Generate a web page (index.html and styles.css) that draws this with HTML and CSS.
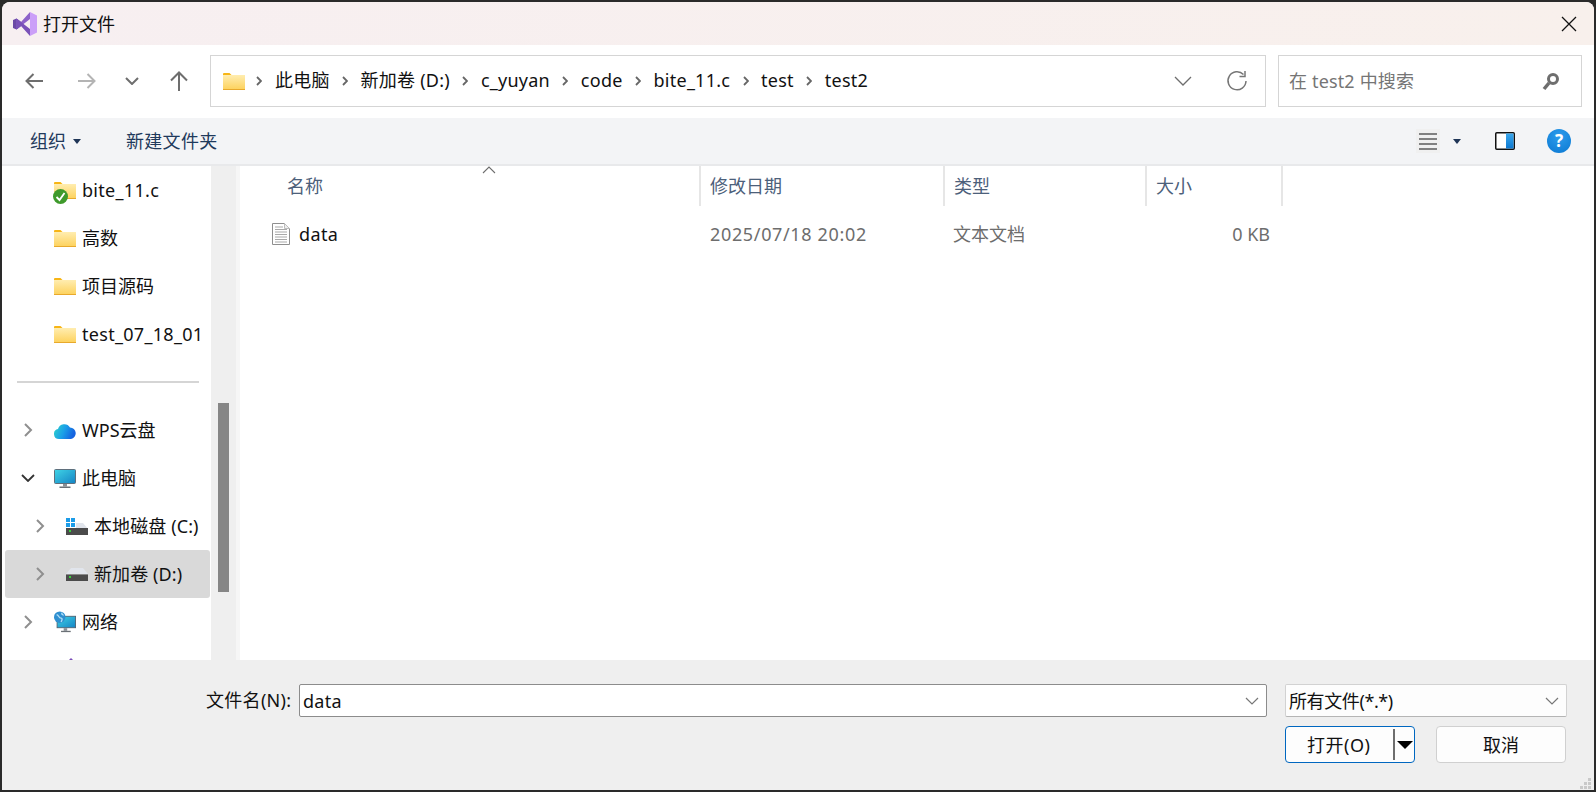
FILE: index.html
```html
<!DOCTYPE html>
<html lang="zh-CN">
<head>
<meta charset="utf-8">
<title>打开文件</title>
<link rel="stylesheet" href="styles.css">
</head>
<body>
<svg class="defs" width="0" height="0" aria-hidden="true">
  <defs>
    <linearGradient id="fg" x1="0" y1="0" x2="0" y2="1"><stop offset="0" stop-color="#ffedb0"/><stop offset="1" stop-color="#fdd15a"/></linearGradient>
    <linearGradient id="cg" x1="0" y1="0" x2="1" y2="0.3"><stop offset="0" stop-color="#2fd6c8"/><stop offset="0.55" stop-color="#1a9fe8"/><stop offset="1" stop-color="#1563e0"/></linearGradient>
    <linearGradient id="mg" x1="0" y1="0" x2="1" y2="1"><stop offset="0" stop-color="#3fd4e6"/><stop offset="1" stop-color="#1583c4"/></linearGradient>
    <linearGradient id="pg" x1="0" y1="0" x2="0" y2="1"><stop offset="0" stop-color="#3aa8ee"/><stop offset="1" stop-color="#0d78d0"/></linearGradient>
    <symbol id="folder" viewBox="0 0 22 17">
      <path d="M0 1a1 1 0 0 1 1-1h5.500l2 2H0z" fill="#f7b516"/>
      <rect x="0" y="2" width="22" height="15" fill="url(#fg)"/>
      <rect x="0" y="16" width="22" height="1" fill="#e8a92c"/>
    </symbol>
    <symbol id="chev-r" viewBox="0 0 10 16"><path d="M2 2l6 6-6 6" fill="none" stroke="#8f8f8f" stroke-width="2"/></symbol>
    <symbol id="chev-s" viewBox="0 0 6 10"><path d="M1 1l4 4-4 4" fill="none" stroke="#666" stroke-width="1.800"/></symbol>
    <symbol id="drive" viewBox="0 0 22 13">
      <path d="M5 0h12l5 6H0z" fill="#e1e5ec"/>
      <rect x="0" y="6" width="22" height="7" fill="#4b4b4b"/>
      <rect x="0" y="6" width="22" height="1" fill="#8a8a8a"/>
      <rect x="3" y="8" width="2" height="2" fill="#37d03c"/>
    </symbol>
  </defs>
</svg>
<main class="dialog">
  <header class="titlebar">
    <svg class="vs-logo" width="24" height="24" viewBox="0 0 24 24" aria-hidden="true">
      <path d="M0 8l3.500-1.500L8 10v4l-4.500 3.500L0 16z" fill="#6b4aa6"/>
      <path d="M3.500 6.500L8 10l9-10v7L3.500 17.500z" fill="#8d62c9"/>
      <path d="M3.500 17.500L8 14l9 10v-7L3.500 6.500z" fill="#7a52b8"/>
      <path d="M17 0l7 3.500v17L17 24z" fill="#cb9ff8"/>
    </svg>
    <span class="title">打开文件</span>
    <svg class="close" width="16" height="16" viewBox="0 0 16 16" aria-hidden="true"><path d="M1 1l14 14M15 1L1 15" stroke="#111" stroke-width="1.300" fill="none"/></svg>
  </header>

  <nav class="navbar">
    <span class="nav-btn w-back"><svg width="18" height="16" viewBox="0 0 18 16"><path d="M18 8H1.500M8.500 1L1.500 8l7 7" fill="none" stroke="#6e6e6e" stroke-width="2"/></svg></span>
    <span class="nav-btn w-fwd"><svg width="18" height="16" viewBox="0 0 18 16"><path d="M0 8h16.500M9.500 1l7 7-7 7" fill="none" stroke="#b4b4b4" stroke-width="2"/></svg></span>
    <span class="nav-btn w-hist"><svg width="14" height="8" viewBox="0 0 14 8"><path d="M1 1l6 6 6-6" fill="none" stroke="#6e6e6e" stroke-width="2"/></svg></span>
    <span class="nav-btn w-up"><svg width="18" height="20" viewBox="0 0 18 20"><path d="M9 20V2M1 9.500L9 1.500l8 8" fill="none" stroke="#6e6e6e" stroke-width="2"/></svg></span>
    <div class="address">
      <svg class="addr-folder" width="22" height="17"><use href="#folder"/></svg>
      <span class="sep"><svg width="6" height="10"><use href="#chev-s"/></svg></span><span class="crumb">此电脑</span>
      <span class="sep"><svg width="6" height="10"><use href="#chev-s"/></svg></span><span class="crumb">新加卷 (D:)</span>
      <span class="sep"><svg width="6" height="10"><use href="#chev-s"/></svg></span><span class="crumb">c_yuyan</span>
      <span class="sep"><svg width="6" height="10"><use href="#chev-s"/></svg></span><span class="crumb">code</span>
      <span class="sep"><svg width="6" height="10"><use href="#chev-s"/></svg></span><span class="crumb">bite_11.c</span>
      <span class="sep"><svg width="6" height="10"><use href="#chev-s"/></svg></span><span class="crumb">test</span>
      <span class="sep"><svg width="6" height="10"><use href="#chev-s"/></svg></span><span class="crumb">test2</span>
      <svg class="addr-drop" width="18" height="10" viewBox="0 0 18 10"><path d="M1 1l8 8 8-8" fill="none" stroke="#6e6e6e" stroke-width="1.300"/></svg>
      <svg class="addr-refresh" width="22" height="22" viewBox="0 0 22 22"><path d="M17.500 4.500A9 9 0 1 0 20 11" fill="none" stroke="#767676" stroke-width="1.500"/><path d="M19 1v5.500h-5.500" fill="none" stroke="#767676" stroke-width="1.500"/></svg>
    </div>
    <div class="search">
      <span class="search-text">在 test2 中搜索</span>
      <svg width="18" height="19" viewBox="0 0 18 19"><circle cx="11" cy="7" r="4.500" fill="none" stroke="#6e6e6e" stroke-width="3"/><path d="M7 11l-5 6" stroke="#6e6e6e" stroke-width="3.500"/></svg>
    </div>
  </nav>

  <div class="toolbar">
    <span class="tool">组织</span>
    <span class="caret caret-org"></span>
    <span class="tool tool-new">新建文件夹</span>
    <span class="view-btn"><svg width="18" height="17" viewBox="0 0 18 17"><path d="M0 1h18M0 6h18M0 11h18M0 16h18" stroke="#111" stroke-width="1.200"/></svg></span>
    <span class="caret caret-view"></span>
    <svg class="pane-icon" width="20" height="18" viewBox="0 0 20 18"><rect x="0.750" y="0.750" width="18.500" height="16.500" rx="1" fill="#fff" stroke="#111" stroke-width="1.500"/><rect x="11" y="1.500" width="7.500" height="15" fill="url(#pg)"/></svg>
    <span class="help">?</span>
  </div>

  <div class="content">
    <aside class="sidebar">
      <div class="row lv1"><span class="exp"></span><span class="ico"><svg width="22" height="17"><use href="#folder"/></svg><svg class="badge" width="15" height="15" viewBox="0 0 15 15"><circle cx="7.500" cy="7.500" r="7.500" fill="#3f9a2c"/><path d="M3.500 8l3 3 5-7" fill="none" stroke="#fff" stroke-width="1.800"/></svg></span><span class="lab lat">bite_11.c</span></div>
      <div class="row lv1"><span class="exp"></span><span class="ico"><svg width="22" height="17"><use href="#folder"/></svg></span><span class="lab">高数</span></div>
      <div class="row lv1"><span class="exp"></span><span class="ico"><svg width="22" height="17"><use href="#folder"/></svg></span><span class="lab">项目源码</span></div>
      <div class="row lv1"><span class="exp"></span><span class="ico"><svg width="22" height="17"><use href="#folder"/></svg></span><span class="lab lat">test_07_18_01</span></div>
      <div class="divider"></div>
      <div class="row lv1"><span class="exp"><svg width="10" height="16"><use href="#chev-r"/></svg></span><span class="ico"><svg width="22" height="17" viewBox="0 0 22 17"><path d="M5 17a5 5 0 0 1-1-9.900A6.500 6.500 0 0 1 16 5.500 5.800 5.800 0 0 1 17 17z" fill="url(#cg)"/></svg></span><span class="lab">WPS云盘</span></div>
      <div class="row lv1"><span class="exp"><svg width="14" height="8" viewBox="0 0 14 8"><path d="M1 1l6 6 6-6" fill="none" stroke="#333" stroke-width="1.800"/></svg></span><span class="ico"><svg width="22" height="19" viewBox="0 0 22 19"><rect x="0.500" y="0.500" width="21" height="14" rx="1" fill="url(#mg)" stroke="#5f6f7c"/><rect x="9" y="15" width="4" height="2.500" fill="#8a9096"/><rect x="5.500" y="17.500" width="11" height="1.500" fill="#6a7076"/></svg></span><span class="lab">此电脑</span></div>
      <div class="row lv2"><span class="exp"><svg width="10" height="16"><use href="#chev-r"/></svg></span><span class="ico"><svg width="22" height="17" viewBox="0 0 22 17"><path d="M0 0h4v4H0zM5 0h4v4H5zM0 5h4v4H0zM5 5h4v4H5z" fill="#1c9ce8"/><path d="M10 5h7l5 6H0l.5-.6H10z" fill="#e1e5ec"/><rect x="0" y="10" width="22" height="7" fill="#4b4b4b"/><rect x="3" y="12" width="2" height="2" fill="#37d03c"/></svg></span><span class="lab">本地磁盘 (C:)</span></div>
      <div class="row lv2 selected"><span class="exp"><svg width="10" height="16"><use href="#chev-r"/></svg></span><span class="ico"><svg width="22" height="13"><use href="#drive"/></svg></span><span class="lab">新加卷 (D:)</span></div>
      <div class="row lv1"><span class="exp"><svg width="10" height="16"><use href="#chev-r"/></svg></span><span class="ico"><svg width="25" height="24" viewBox="0 0 25 24"><rect x="3.500" y="5.500" width="21" height="13" fill="url(#mg)" stroke="#4d6070"/><rect x="11" y="19" width="4" height="3" fill="#8a9096"/><rect x="8" y="22" width="11" height="1.500" fill="#6a7076"/><circle cx="6.500" cy="6.500" r="6.500" fill="#2f8fd0"/><path d="M3 3.500c3 1 2 4 5 4 2 0 1 3 0 4.500M9 1.500c-1 2 1 2 2 3" fill="none" stroke="#b4e0f5" stroke-width="1.500"/></svg></span><span class="lab">网络</span></div>
      <div class="row lv1"><span class="exp"></span><span class="ico"><svg class="next-icon" width="24" height="24" viewBox="0 0 24 24"><path d="M12 0l3 3v21H9V3z" fill="#7a4db8"/></svg></span></div>
    </aside>
    <div class="scrolltrack"><div class="thumb"></div></div>
    <div class="strip"></div>
    <section class="files">
      <div class="cols head">
        <span class="col col-name">名称<svg class="sort" width="14" height="8" viewBox="0 0 14 8"><path d="M1 7l6-6 6 6" fill="none" stroke="#6f6f6f" stroke-width="1.100"/></svg></span>
        <span class="col">修改日期</span>
        <span class="col">类型</span>
        <span class="col">大小</span>
      </div>
      <div class="cols filerow">
        <span class="cell cell-name">
          <svg width="18" height="22" viewBox="0 0 18 22"><path d="M.500.500h12l5 5v16H.500z" fill="#fff" stroke="#8f8f8f"/><path d="M3 4h8M3 6.500h12M3 9h12M3 11.500h12M3 14h12M3 16.500h12M3 19h12" stroke="#a9a9a9"/><path d="M12.500.500v5h5" fill="#eee" stroke="#bdbdbd"/></svg>
          <span class="fname">data</span>
        </span>
        <span class="cell cell-date">2025/07/18 20:02</span>
        <span class="cell">文本文档</span>
        <span class="cell cell-size">0 KB</span>
      </div>
    </section>
  </div>

  <footer class="footer">
    <div class="form-row">
      <span class="fn-label">文件名(N):</span>
      <div class="fn-input"><span class="fn-value">data</span><svg width="14" height="8" viewBox="0 0 14 8"><path d="M1 1l6 6 6-6" fill="none" stroke="#777" stroke-width="1.200"/></svg></div>
      <div class="fn-type"><span class="fn-type-text">所有文件(*.*)</span><svg width="14" height="8" viewBox="0 0 14 8"><path d="M1 1l6 6 6-6" fill="none" stroke="#777" stroke-width="1.200"/></svg></div>
    </div>
    <div class="btn-row">
      <div class="btn btn-open"><span class="open-label">打开(O)</span><span class="open-split"></span><span class="open-tri"></span></div>
      <div class="btn btn-cancel">取消</div>
    </div>
    <svg class="grip" width="12" height="12" viewBox="0 0 12 12" aria-hidden="true"><path d="M8 0h3v3H8zM4 4h3v3H4zM8 4h3v3H8zM0 8h3v3H0zM4 8h3v3H4zM8 8h3v3H8z" fill="#c9c9c9"/></svg>
  </footer>
</main>
</body>
</html>
```
FILE: styles.css
```css
* { box-sizing: border-box; }
html, body { margin: 0; height: 792px; overflow: hidden; }
body {
  background: #2a2a2a;
  padding: 2px;
  font-family: "Noto Sans", "Noto Sans CJK SC", sans-serif;
  font-size: 18px;
  line-height: 26px;
  color: #111;
}
.defs { position: absolute; }
.dialog {
  position: relative;
  width: 1592px;
  height: 788px;
  background: #fff;
  border-radius: 8px 8px 0 0;
  display: flex;
  flex-direction: column;
  overflow: hidden;
}

/* title bar */
.titlebar {
  height: 43px;
  flex: none;
  display: flex;
  align-items: center;
  padding: 0 17px 0 11px;
  background: linear-gradient(90deg, #f7eff1, #f8f0ec);
}
.title { margin-left: 6px; }
.close { margin-left: auto; }

/* navigation */
.navbar {
  height: 73px;
  flex: none;
  display: flex;
  align-items: center;
  padding: 0 0 1px 6px;
  background: #fff;
}
.nav-btn { display: flex; align-items: center; justify-content: center; height: 52px; }
.w-back { width: 52px; }
.w-fwd { width: 53px; }
.w-hist { width: 38px; }
.w-up { width: 56px; }
.address {
  width: 1056px;
  height: 52px;
  margin-left: 3px;
  border: 1px solid #d5d5d5;
  display: flex;
  align-items: center;
  padding: 0 0 2px 12px;
}
.addr-folder { flex: none; margin: 2px -1px 0 0; }
.sep { width: 30.900px; display: flex; justify-content: center; margin-top: 2px; }
.crumb { white-space: nowrap; letter-spacing: 0.250px; }
.addr-drop { margin: 2px 0 0 auto; }
.addr-refresh { margin: 2px 17px 0 34px; }
.search {
  width: 304px;
  height: 52px;
  margin-left: 12px;
  border: 1px solid #d5d5d5;
  display: flex;
  align-items: center;
  justify-content: space-between;
  padding: 0 21px 0 10px;
}
.search-text { color: #757575; letter-spacing: 0.150px; }

/* toolbar */
.toolbar {
  height: 48px;
  flex: none;
  display: flex;
  align-items: center;
  padding: 0 23px 0 28px;
  background: #f3f4f6;
  border-bottom: 2px solid #e8e9eb;
}
.tool { color: #1f3a5c; }
.tool-new { margin-left: 45px; letter-spacing: 0.300px; }
.caret {
  width: 0;
  height: 0;
  border-left: 4px solid transparent;
  border-right: 4px solid transparent;
  border-top: 5px solid #1f3556;
}
.caret-org { margin-left: 7px; }
.view-btn {
  margin-left: auto;
  width: 24px;
  height: 24px;
  background: #f0f0f0;
  display: flex;
  align-items: center;
  justify-content: center;
}
.caret-view { margin-left: 13px; }
.pane-icon { margin-left: 34px; }
.help {
  width: 24px;
  height: 24px;
  margin-left: 32px;
  border-radius: 50%;
  background: radial-gradient(circle at 50% 30%, #2d9cec, #0a78d2);
  color: #fff;
  font-weight: 700;
  font-size: 17px;
  line-height: 24px;
  text-align: center;
}

/* content */
.content { flex: 1; min-height: 0; display: flex; }
.sidebar {
  width: 209px;
  flex: none;
  overflow: hidden;
}
.row { height: 48px; display: flex; align-items: center; white-space: nowrap; }
.exp { display: flex; justify-content: center; align-items: center; flex: none; }
.ico { position: relative; display: flex; align-items: center; justify-content: center; flex: none; }
.lv1 .exp { width: 52px; padding-right: 1px; }
.lv1 .ico { width: 22px; }
.lv1 .lab { margin-left: 6px; }
.lat { letter-spacing: 0.300px; }
.lv2 .exp { width: 64px; padding-left: 12px; }
.lv2 .ico { width: 22px; }
.lv2 .lab { margin-left: 6px; letter-spacing: 0.100px; }
.badge { position: absolute; left: -1px; top: 7px; }
.next-icon { flex: none; margin-left: 12px; }
.divider { height: 2px; margin: 23px 12px 23px 15px; background: #d5d5d5; }
.selected {
  width: 205px;
  margin-left: 3px;
  background: #d9d9d9;
  border-radius: 3px;
}
.selected .exp { width: 61px; padding-left: 9px; }
.scrolltrack { width: 25px; flex: none; background: #efefef; padding-left: 7px; }
.thumb { width: 11px; height: 189px; margin-top: 237px; background: #868686; }
.strip { width: 4px; flex: none; background: #f6f6f6; }
.files { flex: 1; min-width: 0; background: #fff; }
.cols { display: grid; grid-template-columns: 461px 244px 202px 136px; }
.head { height: 40px; }
.col {
  position: relative;
  display: flex;
  align-items: center;
  padding-left: 9px;
  color: #4c607a;
  border-right: 2px solid #e6e6e6;
}
.col-name { padding-left: 47px; }
.sort { position: absolute; left: 242px; top: 0; }
.filerow { height: 48px; margin-top: 4px; color: #6d6d6d; grid-template-columns: 460px 243px 202px 136px; }
.cell { display: flex; align-items: center; padding-left: 10px; white-space: nowrap; }
.cell-name { padding-left: 32px; }
.cell-date { letter-spacing: 0.650px; }
.fname { margin-left: 9px; color: #111; letter-spacing: 0.400px; }
.cell-size { justify-content: flex-end; padding-right: 11px; }

/* footer */
.footer {
  position: relative;
  height: 130px;
  flex: none;
  background: #efefef;
  padding-top: 24px;
}
.form-row { display: flex; align-items: flex-start; padding-left: 204px; }
.fn-label { width: 93px; line-height: 33px; white-space: nowrap; letter-spacing: 0.300px; }
.fn-value { letter-spacing: 0.300px; }
.fn-input {
  width: 968px;
  height: 33px;
  background: #fff;
  border: 1px solid #8c8c8c;
  border-radius: 2px;
  display: flex;
  align-items: center;
  justify-content: space-between;
  padding: 0 7px 0 3px;
}
.fn-type {
  width: 282px;
  height: 33px;
  margin-left: 18px;
  background: #fdfdfd;
  border: 1px solid #d2d2d2;
  border-bottom-color: #b5b5b5;
  border-radius: 2px;
  display: flex;
  align-items: center;
  justify-content: space-between;
  padding: 0 7px 0 3px;
}
.fn-type-text { letter-spacing: -0.400px; }
.btn-row { display: flex; justify-content: flex-end; gap: 21px; margin-top: 9px; padding-right: 28px; }
.btn {
  height: 37px;
  width: 130px;
  background: #fdfdfd;
  border-radius: 4px;
  display: flex;
  align-items: center;
}
.btn-open { border: 1px solid #0067c0; padding-left: 21px; }
.btn-cancel { border: 1px solid #d0d0d0; justify-content: center; }
.open-label { width: 86px; white-space: nowrap; letter-spacing: 0.500px; }
.open-split { width: 2px; height: 31px; background: #6e6e6e; }
.open-tri {
  width: 0;
  height: 0;
  margin-left: 2px;
  border-left: 8px solid transparent;
  border-right: 8px solid transparent;
  border-top: 8px solid #000;
}
.grip { position: absolute; right: 2px; bottom: 0; }
```
